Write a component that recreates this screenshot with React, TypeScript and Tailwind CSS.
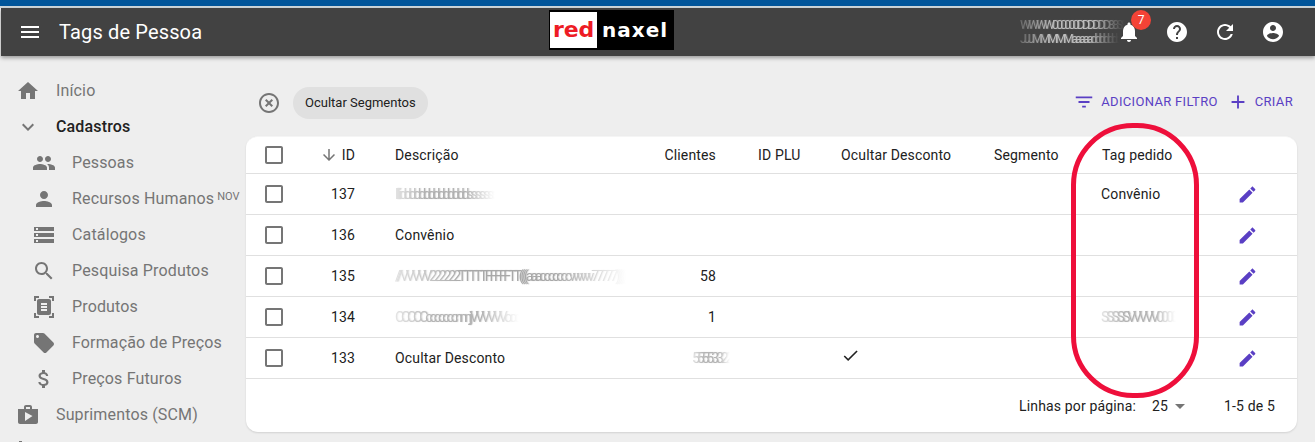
import type { ReactNode } from "react";

const paths = {
  menu: "M3 18h18v-2H3v2zm0-5h18v-2H3v2zm0-7v2h18V6H3z",
  home: "M10 20v-6h4v6h5v-8h3L12 3 2 12h3v8z",
  expand: "M16.59 8.59L12 13.17 7.41 8.59 6 10l6 6 6-6z",
  people:
    "M16 11c1.66 0 2.99-1.34 2.99-3S17.66 5 16 5c-1.66 0-3 1.34-3 3s1.34 3 3 3zm-8 0c1.66 0 2.99-1.34 2.99-3S9.66 5 8 5C6.34 5 5 6.34 5 8s1.34 3 3 3zm0 2c-2.33 0-7 1.17-7 3.5V19h14v-2.5c0-2.33-4.67-3.5-7-3.5zm8 0c-.29 0-.62.02-.97.05 1.16.84 1.97 1.97 1.97 3.45V19h6v-2.5c0-2.33-4.67-3.5-7-3.5z",
  person:
    "M12 12c2.21 0 4-1.79 4-4s-1.79-4-4-4-4 1.79-4 4 1.79 4 4 4zm0 2c-2.67 0-8 1.34-8 4v2h16v-2c0-2.66-5.33-4-8-4z",
  storage:
    "M2 20h20v-4H2v4zm2-3h2v2H4v-2zM2 4v4h20V4H2zm4 3H4V5h2v2zm-4 7h20v-4H2v4zm2-3h2v2H4v-2z",
  search:
    "M15.5 14h-.79l-.28-.27C15.41 12.59 16 11.11 16 9.5 16 5.91 13.09 3 9.5 3S3 5.91 3 9.5 5.91 16 9.5 16c1.61 0 3.09-.59 4.23-1.57l.27.28v.79l5 4.99L20.49 19l-4.99-5zm-6 0C7.01 14 5 11.99 5 9.5S7.01 5 9.5 5 14 7.01 14 9.5 11.99 14 9.5 14z",
  scanner:
    "M7 3H4v3H2V1h5v2zm15 3V1h-5v2h3v3h2zM7 21H4v-3H2v5h5v-2zm13-3v3h-3v2h5v-5h-2zM19 18c0 1.1-.9 2-2 2H7c-1.1 0-2-.9-2-2V6c0-1.1.9-2 2-2h10c1.1 0 2 .9 2 2v12zM15 8H9v2h6V8zm0 3H9v2h6v-2zm0 3H9v2h6v-2z",
  tag: "M21.41 11.58l-9-9C12.05 2.22 11.55 2 11 2H4c-1.1 0-2 .9-2 2v7c0 .55.22 1.05.59 1.42l9 9c.36.36.86.58 1.41.58.55 0 1.05-.22 1.41-.59l7-7c.37-.36.59-.86.59-1.41 0-.55-.23-1.06-.59-1.42zM5.5 7C4.67 7 4 6.33 4 5.5S4.67 4 5.5 4 7 4.67 7 5.5 6.33 7 5.5 7z",
  money:
    "M11.8 10.9c-2.27-.59-3-1.2-3-2.15 0-1.09 1.01-1.85 2.7-1.85 1.78 0 2.44.85 2.5 2.1h2.21c-.07-1.72-1.12-3.3-3.21-3.81V3h-3v2.16c-1.94.42-3.5 1.68-3.5 3.61 0 2.31 1.91 3.46 4.7 4.13 2.5.6 3 1.48 3 2.41 0 .69-.49 1.79-2.7 1.79-2.06 0-2.87-.92-2.98-2.1h-2.2c.12 2.19 1.76 3.42 3.68 3.83V21h3v-2.15c1.95-.37 3.5-1.5 3.5-3.55 0-2.84-2.43-3.81-4.7-4.4z",
  shop: "M16 6V4c0-1.11-.89-2-2-2h-4c-1.11 0-2 .89-2 2v2H2v13c0 1.11.89 2 2 2h16c1.11 0 2-.89 2-2V6h-6zm-6-2h4v2h-4V4zM9 18V9l7.5 4L9 18z",
  cancel:
    "M14.59 8L12 10.59 9.41 8 8 9.41 10.59 12 8 14.59 9.41 16 12 13.41 14.59 16 16 14.59 13.41 12 16 9.41 14.59 8zM12 2C6.47 2 2 6.47 2 12s4.47 10 10 10 10-4.47 10-10S17.53 2 12 2zm0 18c-4.41 0-8-3.59-8-8s3.59-8 8-8 8 3.59 8 8-3.59 8-8 8z",
  filter: "M10 18h4v-2h-4v2zM3 6v2h18V6H3zm3 7h12v-2H6v2z",
  add: "M19 13h-6v6h-2v-6H5v-2h6V5h2v6h6v2z",
  bell: "M12 22c1.1 0 2-.9 2-2h-4c0 1.1.89 2 2 2zm6-6v-5c0-3.07-1.64-5.64-4.5-6.32V4c0-.83-.67-1.5-1.5-1.5s-1.5.67-1.5 1.5v.68C7.63 5.36 6 7.92 6 11v5l-2 2v1h16v-1l-2-2z",
  help: "M12 2C6.48 2 2 6.48 2 12s4.48 10 10 10 10-4.48 10-10S17.52 2 12 2zm1 17h-2v-2h2v2zm2.07-7.75l-.9.92C13.45 12.9 13 13.5 13 15h-2v-.5c0-1.1.45-2.1 1.17-2.83l1.24-1.26c.37-.36.59-.86.59-1.41 0-1.1-.9-2-2-2s-2 .9-2 2H8c0-2.21 1.79-4 4-4s4 1.79 4 4c0 .88-.36 1.68-.93 2.25z",
  refresh:
    "M17.65 6.35C16.2 4.9 14.21 4 12 4c-4.42 0-7.99 3.58-7.99 8s3.57 8 7.99 8c3.73 0 6.84-2.55 7.73-6h-2.08c-.82 2.33-3.04 4-5.65 4-3.31 0-6-2.69-6-6s2.69-6 6-6c1.66 0 3.14.69 4.22 1.78L13 11h7V4l-2.35 2.35z",
  account:
    "M12 2C6.48 2 2 6.48 2 12s4.48 10 10 10 10-4.48 10-10S17.52 2 12 2zm0 3c1.66 0 3 1.34 3 3s-1.34 3-3 3-3-1.34-3-3 1.34-3 3-3zm0 14.2c-2.5 0-4.71-1.28-6-3.22.03-1.99 4-3.08 6-3.08 1.99 0 5.97 1.09 6 3.08-1.29 1.94-3.5 3.22-6 3.22z",
  edit: "M3 17.25V21h3.75L17.81 9.94l-3.75-3.75L3 17.25zM20.71 7.04c.39-.39.39-1.02 0-1.41l-2.34-2.34c-.39-.39-1.02-.39-1.41 0l-1.83 1.83 3.75 3.75 1.83-1.83z",
  box: "M19 5v14H5V5h14m0-2H5c-1.1 0-2 .9-2 2v14c0 1.1.9 2 2 2h14c1.1 0 2-.9 2-2V5c0-1.1-.9-2-2-2z",
  arrowDown: "M20 12l-1.41-1.41L13 16.17V4h-2v12.17l-5.58-5.59L4 12l8 8 8-8z",
  done: "M9 16.2L4.8 12l-1.4 1.4L9 19 21 7l-1.4-1.4L9 16.2z",
  dropDown: "M7 10l5 5 5-5z",
  cut: "M3 2h3v2H5v18H3z",
};

function Icon({ d, className }: { d: string; className?: string }) {
  return (
    <svg viewBox="0 0 24 24" fill="currentColor" className={className ?? "h-6 w-6 shrink-0"}>
      <path d={d} />
    </svg>
  );
}

// texto borrado do print original
function Smear({ text, className }: { text: string; className: string }) {
  return (
    <div
      className={`w-max whitespace-nowrap blur-[0.4px] text-sm tracking-[-0.22em] [text-shadow:1px_0_1px_rgba(170,170,170,0.45)] [mask-image:linear-gradient(to_right,rgba(0,0,0,0.35),black_30%,black_70%,transparent)] ${className}`}
    >
      {text}
    </div>
  );
}

const menu = [
  { label: "Início", icon: paths.home, sub: false },
  { label: "Cadastros", icon: paths.expand, sub: false, open: true },
  { label: "Pessoas", icon: paths.people, sub: true },
  { label: "Recursos Humanos", icon: paths.person, sub: true, novo: true },
  { label: "Catálogos", icon: paths.storage, sub: true },
  { label: "Pesquisa Produtos", icon: paths.search, sub: true },
  { label: "Produtos", icon: paths.scanner, sub: true },
  { label: "Formação de Preços", icon: paths.tag, sub: true },
  { label: "Preços Futuros", icon: paths.money, sub: true },
  { label: "Suprimentos (SCM)", icon: paths.shop, sub: false },
];

const rowGrid =
  "grid grid-cols-[60px_49px_311px_50px_125px_153px_108px_133px_1fr] items-center tracking-[0.15px]";

function Row({
  id,
  desc,
  clientes,
  check,
  tag,
}: {
  id: number;
  desc: ReactNode;
  clientes?: ReactNode;
  check?: boolean;
  tag?: ReactNode;
}) {
  return (
    <div className={`${rowGrid} h-[41px] border-b border-[#e0e0e0] text-sm text-[#212121]`}>
      <div className="pl-4 text-[#757575]">
        <Icon d={paths.box} />
      </div>
      <div className="text-right">{id}</div>
      <div className="pl-10">{desc}</div>
      <div className="text-right">{clientes}</div>
      <div />
      <div>
        {check && <Icon d={paths.done} className="mt-[-5px] h-[19px] w-[19px]" />}
      </div>
      <div />
      <div className="ml-[-1px]">{tag}</div>
      <div className="pl-[2px] text-[#5a3fc4]">
        <Icon d={paths.edit} className="h-[21px] w-[21px]" />
      </div>
    </div>
  );
}

export default function App() {
  return (
    <div className="relative h-[442px] overflow-hidden bg-[#eeeeee] font-['Roboto',sans-serif]">
      <div className="h-[6px] bg-[#00559a]" />
      <div className="h-[2px] bg-[#cfd8dc]" />

      {/* Barra superior */}
      <header className="relative z-10 ml-px flex h-[48px] items-center bg-[#424242] text-white shadow-[0_2px_4px_rgba(0,0,0,0.35)] *:shrink-0">
        <div className="ml-[17px]">
          <Icon d={paths.menu} />
        </div>
        <h1 className="ml-[17px] w-[490px] text-xl leading-none tracking-[0.15px]">Tags de Pessoa</h1>
        <div className="mt-[2px] flex h-10 w-[125px] items-center self-start bg-black pl-px font-['DejaVu_Sans',sans-serif] font-bold leading-none">
          <div className="flex h-9 w-[47px] items-center justify-center bg-white text-[22px] tracking-[-0.01em] text-[#ee1c25]">
            red
          </div>
          <div className="ml-[5px] w-[70px] text-[20px] tracking-[0.05em] text-white">naxel</div>
        </div>
        <div className="ml-[346px] w-[100px] text-[#bdbdbd]">
          <Smear text="WWWW000000DDDDDD88SS" className="!text-[12px] leading-[14px]" />
          <Smear text="JJJMMMMMaaaaaddddddd" className="!text-[12px] leading-[14px]" />
        </div>
        <div className="relative ml-[-15px] w-12 pl-3">
          <Icon d={paths.bell} />
          <span className="absolute left-[26px] top-[-10px] flex h-5 w-5 items-center justify-center rounded-full bg-[#f44336] text-xs">
            7
          </span>
        </div>
        <div className="flex w-12 justify-center">
          <Icon d={paths.help} />
        </div>
        <div className="flex w-12 justify-center">
          <Icon d={paths.refresh} />
        </div>
        <div className="flex w-12 justify-center">
          <Icon d={paths.account} />
        </div>
      </header>

      <div className="flex">
        {/* Menu lateral */}
        <nav className="w-[246px] shrink-0 pt-[17px]">
          {menu.map((m) => (
            <div
              key={m.label}
              className={`flex h-9 items-center whitespace-nowrap tracking-[0.15px] ${m.sub ? "pl-8" : "pl-4"} ${
                m.open ? "font-medium text-[#212121]" : "text-[#757575]"
              }`}
            >
              <div className="w-10 text-[#757575]">
                <Icon d={m.icon} />
              </div>
              <span className="text-base">{m.label}</span>
              {m.novo && (
                <span className="ml-[3px] mt-[10px] self-start text-[11px] leading-[12px] tracking-normal">NOV</span>
              )}
            </div>
          ))}
          <div className="flex h-9 items-center pl-4 text-[#757575]">
            <Icon d={paths.cut} />
          </div>
        </nav>

        {/* Conteúdo */}
        <main className="w-[1051px] shrink-0">
          <div className="flex h-[80px] items-start pt-[31px]">
            <div className="ml-[11px] mt-1 text-[#757575]">
              <Icon d={paths.cancel} />
            </div>
            <span className="ml-3 flex h-8 items-center rounded-2xl bg-[#e0e0e0] px-3 text-[13px] text-[#212121]">
              Ocultar Segmentos
            </span>
            <div className="ml-auto mr-1 mt-1 flex items-center text-[13px] tracking-[0.025em] text-[#5a3fc4]">
              <Icon d={paths.filter} className="h-[22px] w-[22px]" />
              <span className="ml-[6px]">ADICIONAR FILTRO</span>
              <Icon d={paths.add} className="ml-[9px] h-[22px] w-[22px]" />
              <span className="ml-[6px]">CRIAR</span>
            </div>
          </div>

          <section className="h-[296px] rounded-xl border-t border-[#f5f5f5] bg-white shadow-[0_1px_2px_rgba(0,0,0,0.12)]">
            <div className={`${rowGrid} h-[37px] border-b border-[#e0e0e0] text-sm text-[#212121]`}>
              <div className="pl-4 text-[#757575]">
                <Icon d={paths.box} />
              </div>
              <div className="flex items-center justify-end gap-1">
                <Icon d={paths.arrowDown} className="h-[18px] w-[18px] text-[#757575]" />
                ID
              </div>
              <div className="pl-10">Descrição</div>
              <div className="ml-[-10px] text-right whitespace-nowrap">Clientes</div>
              <div className="pl-[42px]">ID PLU</div>
              <div>Ocultar Desconto</div>
              <div>Segmento</div>
              <div>Tag pedido</div>
              <div />
            </div>
            <Row
              id={137}
              desc={<Smear text="lllllliiiiiiddddddddddddddsssssss" className="text-[#b0b0b0]" />}
              tag="Convênio"
            />
            <Row id={136} desc="Convênio" />
            <Row
              id={135}
              desc={
                <Smear
                  text="///VVVVV222222TTTTTFFFFFTT((((aaacccccccvvvvvv77777))))))"
                  className="text-[#a8a8a8]"
                />
              }
              clientes="58"
            />
            <Row
              id={134}
              desc={<Smear text="CCCCCcccccccnnnjjjVVVVVVooo" className="text-[#b4b4b4]" />}
              clientes="1"
              tag={<Smear text="SSSSSVVVVV0000" className="text-[#b4b4b4]" />}
            />
            <Row
              id={133}
              desc="Ocultar Desconto"
              clientes={
                <div className="relative">
                  <Smear text="55553322" className="absolute left-[26px] top-[-10px] text-[#b4b4b4]" />
                </div>
              }
              check
            />
            <div className="flex h-[53px] items-center text-sm tracking-[0.15px] text-[#212121]">
              <span className="ml-[773px]">Linhas por página:</span>
              <span className="ml-4 flex items-center">
                25
                <Icon d={paths.dropDown} className="h-6 w-6 text-[#757575]" />
              </span>
              <span className="ml-[32px]">1-5 de 5</span>
            </div>
          </section>
        </main>
      </div>

      {/* marcação vermelha sobre o print */}
      <div className="pointer-events-none absolute left-[1071px] top-[123px] z-20 h-[275px] w-[128px] rounded-[62px] border-[5px] border-[#ee0f3b]" />
    </div>
  );
}
